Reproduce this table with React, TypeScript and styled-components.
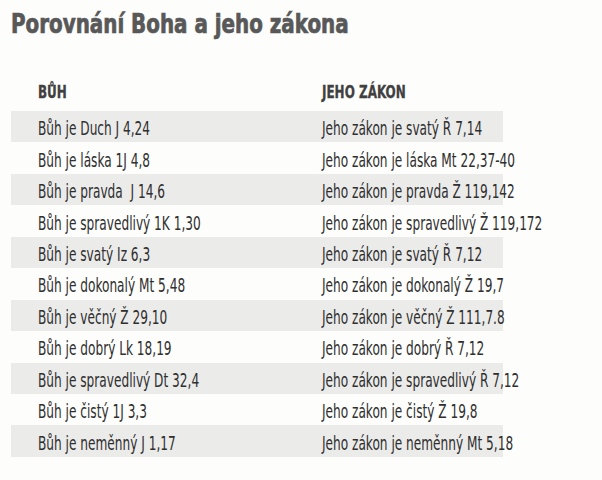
import styled, { createGlobalStyle } from 'styled-components';

const GlobalStyle = createGlobalStyle`
  html, body {
    margin: 0;
    padding: 0;
    background: #fdfdfc;
  }
  body {
    font-family: "DejaVu Sans Condensed", "Liberation Sans Narrow", "Roboto Condensed", "DejaVu Sans", sans-serif;
    font-stretch: condensed;
    color: #333;
  }
`;

const rows: [string, string][] = [
  ['Bůh je Duch J 4,24', 'Jeho zákon je svatý Ř 7,14'],
  ['Bůh je láska 1J 4,8', 'Jeho zákon je láska Mt 22,37-40'],
  ['Bůh je pravda  J 14,6', 'Jeho zákon je pravda Ž 119,142'],
  ['Bůh je spravedlivý 1K 1,30', 'Jeho zákon je spravedlivý Ž 119,172'],
  ['Bůh je svatý Iz 6,3', 'Jeho zákon je svatý Ř 7,12'],
  ['Bůh je dokonalý Mt 5,48', 'Jeho zákon je dokonalý Ž 19,7'],
  ['Bůh je věčný Ž 29,10', 'Jeho zákon je věčný Ž 111,7.8'],
  ['Bůh je dobrý Lk 18,19', 'Jeho zákon je dobrý Ř 7,12'],
  ['Bůh je spravedlivý Dt 32,4', 'Jeho zákon je spravedlivý Ř 7,12'],
  ['Bůh je čistý 1J 3,3', 'Jeho zákon je čistý Ž 19,8'],
  ['Bůh je neměnný J 1,17', 'Jeho zákon je neměnný Mt 5,18'],
];

const App = () => {
  return (
    <>
      <GlobalStyle />
      <Page>
        <Title>Porovnání Boha a jeho zákona</Title>
        <Table>
          <HeadRow>
            <HeadCell>BŮH</HeadCell>
            <HeadCell>JEHO ZÁKON</HeadCell>
          </HeadRow>
          {rows.map(([god, law], i) => (
            <Row key={i} $shaded={i % 2 === 0}>
              <Cell>{god}</Cell>
              <Cell>{law}</Cell>
            </Row>
          ))}
        </Table>
      </Page>
    </>
  );
};

export default App;

const Page = styled.div`
  width: 602px;
  height: 480px;
  padding: 9px 0 0 11px;
  box-sizing: border-box;
`;

const Title = styled.h1`
  margin: 0;
  font-size: 26px;
  font-weight: 800;
  color: #585858;
  line-height: 30px;
  white-space: nowrap;
  transform: scaleX(0.85);
  transform-origin: left center;
  -webkit-text-stroke: 0.7px #585858;
`;

const Table = styled.div`
  width: 492px;
  margin-top: 43px;
`;

const HeadRow = styled.div`
  display: grid;
  grid-template-columns: 284px 1fr;
  padding-left: 27px;
  height: 29px;
  align-items: start;
`;

const HeadCell = styled.div`
  font-size: 17.5px;
  font-weight: 700;
  color: #404040;
  line-height: 20px;
  white-space: nowrap;
  transform: scaleX(0.76);
  transform-origin: left center;
  -webkit-text-stroke: 0.3px #404040;
`;

const Row = styled.div<{ $shaded: boolean }>`
  display: grid;
  grid-template-columns: 284px 1fr;
  padding-left: 27px;
  height: 31.45px;
  box-sizing: border-box;
  padding-top: 3px;
  align-items: center;
  background: ${(p) => (p.$shaded ? '#ebebea' : 'transparent')};
`;

const Cell = styled.div`
  font-size: 20px;
  color: #2f2f2f;
  white-space: pre;
  transform: scaleX(0.675);
  transform-origin: left center;
`;
